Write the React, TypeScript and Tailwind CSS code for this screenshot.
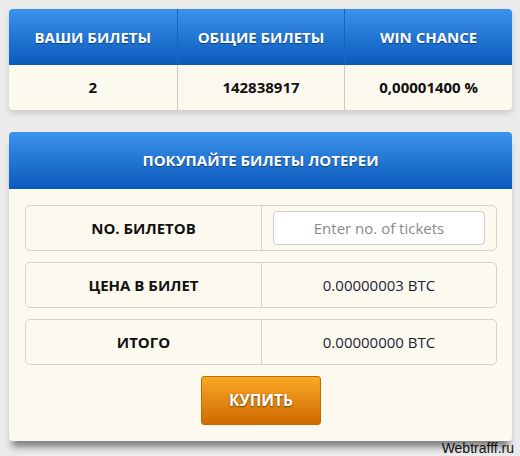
import React from 'react';

const headerBg = 'bg-gradient-to-b from-[#3b93ec] to-[#0859bb]';

export default function App() {
  return (
    <div className="relative w-[520px] h-[456px] bg-[#ebebeb] pl-[9px] pt-[9px] font-['Open_Sans',sans-serif]">
      <div className="w-[503px] rounded-[4px] bg-[#fcfaee] shadow-[0_3px_6px_rgba(0,0,0,0.15)] overflow-hidden">
        <div className={`grid grid-cols-3 h-[56px] ${headerBg}`}>
          {['ВАШИ БИЛЕТЫ', 'ОБЩИЕ БИЛЕТЫ', 'WIN CHANCE'].map((t, i) => (
            <div
              key={t}
              className={`flex items-center justify-center text-white font-bold text-[15px] [text-shadow:0_1px_1px_rgba(0,0,0,0.45)] ${i > 0 ? 'border-l border-[#1865c0]' : ''}`}
            >
              {t}
            </div>
          ))}
        </div>
        <div className="grid grid-cols-3 h-[45px]">
          {['2', '142838917', '0,00001400 %'].map((t, i) => (
            <div
              key={t}
              className={`flex items-center justify-center text-[#111] font-bold text-[15px] ${i > 0 ? 'border-l border-[#c8c8c8]' : ''}`}
            >
              {t}
            </div>
          ))}
        </div>
      </div>

      <div className="mt-[22px] w-[503px] rounded-[4px] bg-[#fcfaee] shadow-[0_9px_7px_-3px_rgba(0,0,0,0.45)] overflow-hidden">
        <div className={`h-[57px] flex items-center justify-center text-white font-bold text-[15px] [text-shadow:0_1px_1px_rgba(0,0,0,0.45)] ${headerBg}`}>
          ПОКУПАЙТЕ БИЛЕТЫ ЛОТЕРЕИ
        </div>
        <div className="px-[16px] pr-[15px] pt-[16px] pb-[16px] flex flex-col gap-[11px]">
          <div className="grid grid-cols-2 h-[46px] rounded-[5px] border border-[#d2d2d2]">
            <div className="flex items-center justify-center font-bold text-[15px] text-[#111]">NO. БИЛЕТОВ</div>
            <div className="flex items-center justify-center border-l border-[#d2d2d2] px-[11px]">
              <input
                placeholder="Enter no. of tickets"
                className="w-full h-[34px] rounded-[4px] border border-[#cfcfcf] bg-white text-center text-[15px] text-[#333] placeholder:text-[#8a8a8a] outline-none"
              />
            </div>
          </div>
          <div className="grid grid-cols-2 h-[46px] rounded-[5px] border border-[#d2d2d2]">
            <div className="flex items-center justify-center font-bold text-[15px] text-[#111]">ЦЕНА В БИЛЕТ</div>
            <div className="flex items-center justify-center border-l border-[#d2d2d2] text-[15px] text-[#1c1c3c]">0.00000003 BTC</div>
          </div>
          <div className="grid grid-cols-2 h-[46px] rounded-[5px] border border-[#d2d2d2]">
            <div className="flex items-center justify-center font-bold text-[15px] text-[#111]">ИТОГО</div>
            <div className="flex items-center justify-center border-l border-[#d2d2d2] text-[15px] text-[#1c1c3c]">0.00000000 BTC</div>
          </div>
          <div className="flex justify-center">
            <button className="w-[120px] h-[49px] rounded-[3px] border border-[#c46a00] bg-gradient-to-b from-[#fba823] to-[#cd6b00] text-white font-bold text-[15.5px] [text-shadow:0_1px_2px_rgba(0,0,0,0.55)]">
              КУПИТЬ
            </button>
          </div>
        </div>
      </div>

      <div className="absolute right-[6px] bottom-[1px] font-['Liberation_Sans',sans-serif] text-[14px] leading-none text-[#111]">
        Webtrafff.ru
      </div>
    </div>
  );
}
